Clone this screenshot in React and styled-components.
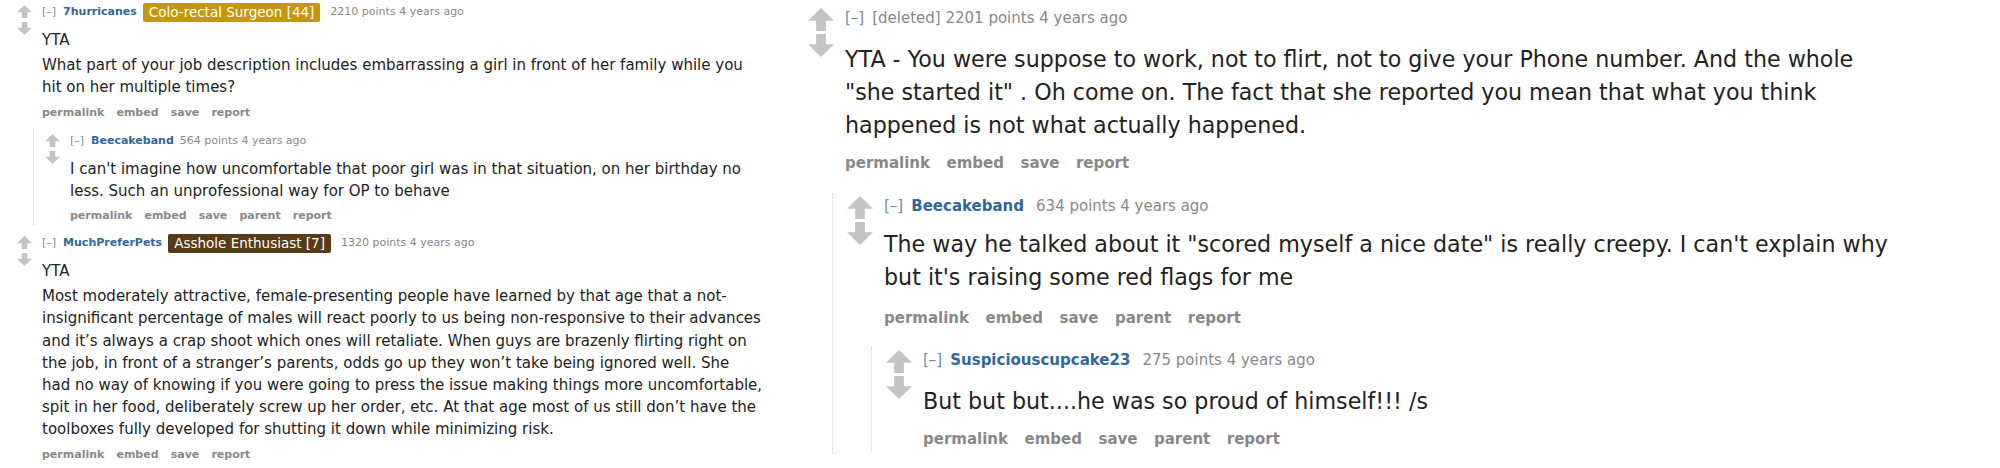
import React from "react";
import styled, { createGlobalStyle } from "styled-components";

const GlobalStyle = createGlobalStyle`
  html, body {
    margin: 0;
    padding: 0;
    background: #fff;
  }
  body {
    font-family: "DejaVu Sans", Verdana, sans-serif;
  }
`;

// sizes for the two screenshots: old reddit at 1x (sm) and at 1.5x (lg)
const metrics = {
  sm: {
    arrowW: 15, arrowH: 13, arrowGap: 4, voteCol: 25,
    tag: 11, tagLine: 16, flair: 13.5, flairLine: 19,
    body: 15, bodyLine: 22.2, bodyTop: 9, pGap: 3,
    btn: 11, btnLine: 14, btnTop: 7,
    childLeft: 16, childPad: 11,
  },
  lg: {
    arrowW: 26, arrowH: 23, arrowGap: 3, voteCol: 37,
    tag: 15, tagLine: 21, flair: 20, flairLine: 28,
    body: 22.2, bodyLine: 33, bodyTop: 14, pGap: 4,
    btn: 15, btnLine: 20, btnTop: 11,
    childLeft: 24, childPad: 14,
  },
};

const m = (key) => (p) => metrics[p.$size][key];

const Page = styled.div`
  display: grid;
  grid-template-columns: 800px 1fr;
  width: 2000px;
  height: 468px;
  overflow: hidden;
`;

const LeftPanel = styled.div`
  padding-left: 17px;
`;

const RightPanel = styled.div`
  padding-left: 8px;
`;

const Thing = styled.div`
  padding-top: ${(p) => p.$top}px;
`;

const Entry = styled.div`
  display: flex;
  align-items: flex-start;
`;

const Votes = styled.div`
  flex: 0 0 ${m("voteCol")}px;
  display: flex;
  flex-direction: column;
  gap: ${m("arrowGap")}px;
  padding-top: ${(p) => (p.$size === "sm" ? 1 : 0)}px;
`;

const ArrowSvg = styled.svg`
  display: block;
  width: ${m("arrowW")}px;
  height: ${m("arrowH")}px;
  transform: ${(p) => (p.$down ? "rotate(180deg)" : "none")};
`;

const Body = styled.div`
  flex: 1;
  min-width: 0;
`;

const Tagline = styled.div`
  display: flex;
  align-items: center;
  height: ${m("tagLine")}px;
  line-height: ${m("tagLine")}px;
  font-size: ${m("tag")}px;
  color: #888;
  white-space: nowrap;
`;

const Expand = styled.span`
  color: #6d8db0;
  margin-right: ${(p) => (p.$size === "sm" ? 7 : 8)}px;
`;

const Author = styled.span`
  color: #336699;
  font-weight: bold;
  margin-right: ${(p) => (p.$size === "sm" ? 6 : 12)}px;
`;

const Flair = styled.span`
  display: inline-block;
  background: ${(p) => p.$bg};
  color: #fff;
  font-size: ${m("flair")}px;
  line-height: ${m("flairLine")}px;
  padding: 0 6px;
  border-radius: 2px;
  margin-right: 10px;
`;

const Md = styled.div`
  margin-top: ${(p) => metrics[p.$size].bodyTop - (p.$tight ? 3 : 0)}px;
  font-size: ${m("body")}px;
  line-height: ${m("bodyLine")}px;
  color: #222;

  p {
    margin: 0 0 ${m("pGap")}px 0;
    white-space: pre-line;
  }
`;

const Buttons = styled.ul`
  display: flex;
  list-style: none;
  margin: ${(p) => metrics[p.$size].btnTop + (p.$tight ? 3 : 0)}px 0 0 0;
  padding: 0;
  font-size: ${m("btn")}px;
  line-height: ${m("btnLine")}px;
  font-weight: bold;
  color: #888;

  li {
    margin-right: 1.1em;
  }
`;

const Child = styled.div`
  margin-top: ${(p) => p.$gap}px;
  margin-left: ${m("childLeft")}px;
  padding-left: ${m("childPad")}px;
  padding-bottom: 2px;
  border-left: 1px dotted #d4d4d4;
`;

function Arrow({ size, down }) {
  return (
    <ArrowSvg $size={size} $down={down} viewBox="0 0 15 13" preserveAspectRatio="none">
      <path d="M7.5 0 L15 7.2 H10.3 V13 H4.7 V7.2 H0 Z" fill="#c4c4c4" />
    </ArrowSvg>
  );
}

function Comment({ size, top = 0, tight, author, flair, score, paras, buttons, childGap, children }) {
  return (
    <Thing $top={top}>
      <Entry>
        <Votes $size={size}>
          <Arrow size={size} />
          <Arrow size={size} down />
        </Votes>
        <Body>
          <Tagline $size={size}>
            <Expand $size={size}>[–]</Expand>
            {author ? <Author $size={size}>{author}</Author> : null}
            {flair ? (
              <Flair $size={size} $bg={flair.bg}>
                {flair.text}
              </Flair>
            ) : null}
            <span>{score}</span>
          </Tagline>
          <Md $size={size} $tight={tight}>
            {paras.map((t, i) => (
              <p key={i}>{t}</p>
            ))}
          </Md>
          <Buttons $size={size} $tight={tight}>
            {buttons.map((b) => (
              <li key={b}>{b}</li>
            ))}
          </Buttons>
        </Body>
      </Entry>
      {children ? (
        <Child $size={size} $gap={childGap}>
          {children}
        </Child>
      ) : null}
    </Thing>
  );
}

const rootButtons = ["permalink", "embed", "save", "report"];
const replyButtons = ["permalink", "embed", "save", "parent", "report"];

export default function App() {
  return (
    <>
      <GlobalStyle />
      <Page>
        <LeftPanel>
          <Comment
            size="sm"
            top={4}
            author="7hurricanes"
            flair={{ text: "Colo-rectal Surgeon [44]", bg: "#c4980c" }}
            score="2210 points 4 years ago"
            paras={[
              "YTA",
              "What part of your job description includes embarrassing a girl in front of her family while you\nhit on her multiple times?",
            ]}
            buttons={rootButtons}
            childGap={8}
          >
            <Comment
              size="sm"
              top={5}
              author="Beecakeband"
              score="564 points 4 years ago"
              paras={[
                "I can't imagine how uncomfortable that poor girl was in that situation, on her birthday no\nless. Such an unprofessional way for OP to behave",
              ]}
              buttons={replyButtons}
            />
          </Comment>
          <Comment
            size="sm"
            top={10}
            author="MuchPreferPets"
            flair={{ text: "Asshole Enthusiast [7]", bg: "#563b16" }}
            score="1320 points 4 years ago"
            paras={[
              "YTA",
              "Most moderately attractive, female-presenting people have learned by that age that a not-\ninsignificant percentage of males will react poorly to us being non-responsive to their advances\nand it’s always a crap shoot which ones will retaliate. When guys are brazenly flirting right on\nthe job, in front of a stranger’s parents, odds go up they won’t take being ignored well. She\nhad no way of knowing if you were going to press the issue making things more uncomfortable,\nspit in her food, deliberately screw up her order, etc. At that age most of us still don’t have the\ntoolboxes fully developed for shutting it down while minimizing risk.",
            ]}
            buttons={rootButtons}
          />
        </LeftPanel>
        <RightPanel>
          <Comment
            size="lg"
            top={8}
            score="[deleted] 2201 points 4 years ago"
            paras={[
              'YTA - You were suppose to work, not to flirt, not to give your Phone number. And the whole\n"she started it" . Oh come on. The fact that she reported you mean that what you think\nhappened is not what actually happened.',
            ]}
            buttons={rootButtons}
            childGap={20}
          >
            <Comment
              size="lg"
              top={3}
              tight
              author="Beecakeband"
              score="634 points 4 years ago"
              paras={[
                'The way he talked about it "scored myself a nice date" is really creepy. I can\'t explain why\nbut it\'s raising some red flags for me',
              ]}
              buttons={replyButtons}
              childGap={19}
            >
              <Comment
                size="lg"
                top={3}
                author="Suspiciouscupcake23"
                score="275 points 4 years ago"
                paras={["But but but....he was so proud of himself!!! /s"]}
                buttons={replyButtons}
              />
            </Comment>
          </Comment>
        </RightPanel>
      </Page>
    </>
  );
}
